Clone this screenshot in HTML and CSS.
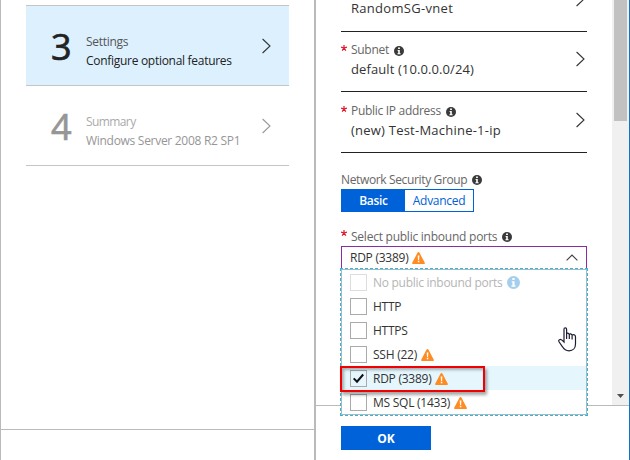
FILE: index.html
```html
<!DOCTYPE html>
<html lang="en">
<head>
<meta charset="utf-8">
<title>Create virtual machine - Settings</title>
<link rel="stylesheet" href="styles.css">
</head>
<body>
<svg class="defs" width="0" height="0">
  <symbol id="chev" viewBox="0 0 9 16"><path d="M.6 1 8 8 .6 15" fill="none" stroke="currentColor" stroke-width="1.1"/></symbol>
  <symbol id="info" viewBox="0 0 10 10"><circle cx="5" cy="5" r="5" fill="currentColor"/><path d="M4.1 1.6h1.8v1.5H4.1zM3.6 4h2.2v3.3h.8v.9H3.4v-.9h.8V4.9h-.6z" fill="#fff"/></symbol>
  <symbol id="warn" viewBox="0 0 13 12"><path d="M6.5 0Q7.1 0 7.4.6L12.8 10.7Q13.3 12 12 12H1Q-.3 12 .2 10.7L5.6.6Q5.9 0 6.5 0Z" fill="#ff8c22"/><path d="M5.7 3.6h1.7L7.1 8H6zM5.8 8.8h1.5v1.5H5.8z" fill="#fff"/></symbol>
  <symbol id="req" viewBox="0 0 6 6"><path d="M3 0v3M0 2.2l3 .8M6 2.2 3 3M1.2 5.6 3 3l1.8 2.6" fill="none" stroke="#e3132c" stroke-width="1.2"/></symbol>
</svg>
<div class="app">
  <section class="blade steps">
    <div class="step-list">
      <div class="step active">
        <span class="num">3</span>
        <div class="step-text"><div class="step-title">Settings</div><div class="step-sub">Configure optional features</div></div>
        <svg class="chev"><use href="#chev"/></svg>
      </div>
      <div class="step disabled">
        <span class="num">4</span>
        <div class="step-text"><div class="step-title w-summary">Summary</div><div class="step-sub">Windows Server 2008 R2 SP1</div></div>
        <svg class="chev"><use href="#chev"/></svg>
      </div>
    </div>
    <div class="blade-foot"></div>
  </section>
  <section class="blade settings">
    <div class="scroll-area">
      <div class="form">
        <div class="picker first">
          <div class="picker-text"><div class="value w-vnet">RandomSG-vnet</div></div>
          <svg class="chev"><use href="#chev"/></svg>
        </div>
        <div class="picker">
          <svg class="req"><use href="#req"/></svg>
          <div class="picker-text"><div class="label"><span>Subnet</span><svg class="info"><use href="#info"/></svg></div><div class="value w-default">default (10.0.0.0/24)</div></div>
          <svg class="chev"><use href="#chev"/></svg>
        </div>
        <div class="picker tall">
          <svg class="req"><use href="#req"/></svg>
          <div class="picker-text"><div class="label"><span>Public IP address</span><svg class="info"><use href="#info"/></svg></div><div class="value w-new">(new) Test-Machine-1-ip</div></div>
          <svg class="chev"><use href="#chev"/></svg>
        </div>
        <div class="label nsg"><span class="w-nsg">Network Security Group</span><svg class="info"><use href="#info"/></svg></div>
        <div class="toggle"><div class="opt on">Basic</div><div class="opt">Advanced</div></div>
        <div class="ports-label"><svg class="req"><use href="#req"/></svg><div class="label"><span class="w-select">Select public inbound ports</span><svg class="info"><use href="#info"/></svg></div></div>
        <div class="select">
          <span>RDP (3389)</span><svg class="warn"><use href="#warn"/></svg>
          <svg class="up" viewBox="0 0 12 7"><path d="M.6 6.4 6 1l5.4 5.4" fill="none" stroke="#444" stroke-width="1.2"/></svg>
          <div class="menu">
            <div class="item off"><i class="box"></i><span class="w-none">No public inbound ports</span><svg class="info big"><use href="#info"/></svg></div>
            <div class="item"><i class="box"></i><span>HTTP</span></div>
            <div class="item"><i class="box"></i><span>HTTPS</span></div>
            <div class="item"><i class="box"></i><span>SSH (22)</span><svg class="warn"><use href="#warn"/></svg></div>
            <div class="item sel"><i class="box"><svg viewBox="0 0 15 15"><path d="M2.7 7.4 6 10.7l6.2-7.2" fill="none" stroke="#111" stroke-width="2"/></svg></i><span>RDP (3389)</span><svg class="warn"><use href="#warn"/></svg></div>
            <div class="item"><i class="box"></i><span>MS SQL (1433)</span><svg class="warn"><use href="#warn"/></svg></div>
            <div class="callout"></div>
            <svg class="hand" viewBox="0 0 19 25"><path d="M6 15V2.3Q6 .8 7.3.8T8.6 2.3V6.8Q9.8 5.3 11.2 7.3 12.8 6 14 8 17.5 6.8 17.5 10V17C17.5 21 15 23.8 11 23.8 7.5 23.8 5.8 22 4.5 19.8L1 14.8Q.2 13 2 12.5 3.3 12.2 6 15ZM8.6 6.8V12M11.3 7.3V12M14.1 8V12.5" fill="#fff" stroke="#1c1c30" stroke-width="1.2"/></svg>
          </div>
        </div>
      </div>
      <div class="scrollbar"><div class="thumb"></div><div class="arrow"></div></div>
    </div>
    <div class="actions"><div class="ok">OK</div></div>
  </section>
</div>
</body>
</html>
```
FILE: styles.css
```css
* { box-sizing: border-box; }
body { margin: 0; background: #fff; color: #333; font: 12px/16px "Open Sans", "Noto Sans", sans-serif; }
.defs { position: absolute; }
svg { display: block; flex: none; }
span { white-space: nowrap; }
.app { display: flex; width: 630px; height: 460px; overflow: hidden; border-left: 1px solid #bababa; border-right: 1px solid #1874bd; }
.blade { display: flex; flex-direction: column; }
.steps { width: 315px; border-right: 2px solid #bababa; }
.step-list { flex: 1; padding: 5px 25px 0; }
.step { display: flex; height: 80px; width: 263px; padding: 0 18px 0 25px; border-top: 1px solid #c5c5c5; }
.step.active { background: #dcf0fe; color: #222; }
.step.disabled { height: 81px; border-bottom: 1px solid #c5c5c5; color: #969696; }
.num { width: 35px; padding-top: 20px; font-size: 36px; line-height: 42px; -webkit-text-stroke: .7px currentColor; }
.step-text { flex: 1; padding-top: 28px; white-space: nowrap; letter-spacing: -.29px; }
.step-sub { margin-top: 3px; }
.step-title { color: #555; }
.disabled .step-title { color: #aaa; }
.w-summary { letter-spacing: -.6px; }
.chev { width: 9px; height: 16px; color: #333; }
.step .chev { margin-top: 32px; color: #333; }
.step.disabled .chev { color: #999; }
.blade-foot { height: 31px; border-top: 1px solid #bababa; }
.settings { flex: 1; }
.scroll-area { display: flex; justify-content: space-between; height: 405px; }
.form { width: 271px; padding-left: 25px; }
.picker { display: flex; width: 246px; height: 60px; border-bottom: 1px solid #222; }
.picker .chev { margin: 19px 2px 0 0; }
.picker.first { height: 32px; padding-left: 10px; }
.picker.first .picker-text { padding-top: 0; margin-top: -3px; }
.picker.first .chev { margin-top: -9px; }
.picker.tall { height: 61px; }
.picker.tall .chev { margin-top: 20px; }
.picker-text { flex: 1; padding-top: 10px; white-space: nowrap; }
.picker.tall .picker-text { padding-top: 11px; }
.label { display: flex; height: 16px; align-items: center; color: #666; letter-spacing: -.3px; }
.value { margin-top: 2px; font-size: 13px; line-height: 18px; }
.w-vnet { letter-spacing: .3px; }
.w-default { letter-spacing: .1px; }
.w-new { letter-spacing: .23px; }
.w-nsg { letter-spacing: -.36px; }
.w-select { letter-spacing: -.24px; }
.req { width: 6px; height: 6px; margin: 13px 4px 0 0; }
.tall .req { margin-top: 14px; }
.info { width: 10px; height: 10px; margin: 1px 0 0 5px; color: #3a3a3a; }
.nsg { margin-top: 19px; }
.nsg .info { margin-top: -1px; }
.toggle { display: flex; width: 133px; height: 23px; margin-top: 1px; border: 1px solid #0062d9; text-align: center; line-height: 22px; color: #0062d9; }
.opt { flex: 1; letter-spacing: -.3px; }
.opt.on { flex: 0 0 63px; background: #0062d9; color: #fff; font-weight: 600; }
.ports-label { display: flex; height: 34px; }
.ports-label .label { margin-top: 17px; }
.ports-label .info { margin-top: -1px; }
.ports-label .req { margin-top: 18px; }
.select { position: relative; display: flex; align-items: center; width: 246px; height: 23px; padding: 0 8px; border: 1px solid #8a2da5; letter-spacing: -.25px; }
.warn { width: 13px; height: 12px; margin-left: 4px; }
.up { width: 12px; height: 7px; margin-left: auto; }
.menu { position: absolute; left: -2px; top: 21px; width: 248px; height: 148px; border: 1px dashed #21bde8; background: #fff; box-shadow: inset 0 0 0 1px #b5b5b5; padding: 1px; }
.item { display: flex; align-items: center; height: 24px; padding-left: 8px; }
.item span { padding-top: 2px; }
.item .warn { margin-top: 1px; }
.item.sel { background: #e5f6fd; }
.item.off { color: #b5b5b5; }
.box { width: 17px; height: 17px; margin-right: 6px; border: 1px solid #aaa; background: #fff; }
.off .box { border-color: #ddd; }
.sel .box { background: transparent; }
.w-none { letter-spacing: -.28px; }
.info.big { width: 13px; height: 13px; margin-left: 4px; color: #a3cfec; }
.callout { position: absolute; left: -1px; top: 97px; width: 145px; height: 26px; border: 2px solid #f00000; box-shadow: 2px 3px 3px rgba(0,0,0,.35), inset 2px 2px 3px rgba(0,0,0,.3); }
.hand { position: absolute; left: 217px; top: 58px; width: 19px; height: 25px; }
.scrollbar { display: flex; flex-direction: column; align-items: center; justify-content: space-between; width: 17px; background: #f0f0f0; }
.thumb { width: 13px; height: 121px; background: #c1c1c1; }
.arrow { width: 7px; height: 4px; margin-bottom: 7px; background: #505050; clip-path: polygon(0 0, 100% 0, 50% 100%); }
.actions { flex: 1; padding: 20px 25px 0; border-top: 1px solid #bababa; }
.ok { width: 90px; height: 24px; background: #0062d9; color: #fff; text-align: center; font-weight: 700; line-height: 25px; }
```
